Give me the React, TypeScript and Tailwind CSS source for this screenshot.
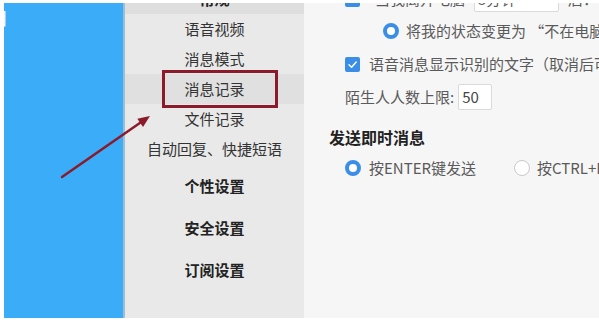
import React from "react";

const font = { fontFamily: '"Noto Sans CJK SC", "Noto Sans", sans-serif' };

function Check() {
  return (
    <span className="flex h-[15px] w-[15px] shrink-0 items-center justify-center rounded-[2px] bg-[#3a8ee8]">
      <svg width="11" height="11" viewBox="0 0 12 12">
        <path d="M2.2 6.3 L5 9 L10 3.2" fill="none" stroke="#fff" strokeWidth="1.6" strokeLinecap="round" strokeLinejoin="round" />
      </svg>
    </span>
  );
}

function RadioOn() {
  return <span className="box-border block h-[16px] w-[16px] shrink-0 rounded-full border-[4.5px] border-[#3a8ee8] bg-white" />;
}

export default function App() {
  const items = ["语音视频", "消息模式", "消息记录", "文件记录", "自动回复、快捷短语"];
  const bold = ["个性设置", "安全设置", "订阅设置"];
  return (
    <div className="relative h-[324px] w-[599px] overflow-hidden bg-white pl-[4px] pt-[3px]" style={font}>
      <div className="flex h-[315px]">
        {/* blue desktop */}
        <div className="w-[119px] overflow-hidden bg-[#3aacf8] pt-[5px]">
          <span className="-ml-[13px] block text-[17px] leading-[20px] text-white">目</span>
        </div>
        <div className="w-[2px] bg-[#9fbdd3]" />
        {/* sidebar */}
        <div className="w-[179px] overflow-hidden bg-[#e9e9e9] text-[15px] text-[#333]">
          <div className="-mt-[19px] flex h-[30px] items-center justify-center bg-[#dedede] font-bold text-[#222]">常规</div>
          {items.map((t) => (
            <div
              key={t}
              className={
                "flex h-[30px] items-center justify-center " + (t === "消息记录" ? "bg-[#e0e0e0]" : "")
              }
            >
              {t}
            </div>
          ))}
          <div className="h-[1px]" />
          {bold.map((t) => (
            <div key={t} className="flex h-[42px] items-center justify-center font-bold text-[#222]">
              {t}
            </div>
          ))}
        </div>
        {/* content */}
        <div className="flex-1 overflow-hidden bg-[#f6f6f6] text-[15px] text-[#5a5a5a]">
          <div className="-mt-[17px] ml-[41px] flex h-[26px] items-center whitespace-nowrap">
            <Check />
            <span className="ml-[15px]">当我离开电脑</span>
            <span className="ml-[9px] flex h-[26px] w-[85px] items-center rounded-[2px] border border-[#dadada] bg-white px-[3px]">5分钟</span>
            <span className="ml-[9px]">后：</span>
          </div>
          <div className="ml-[79px] flex h-[38px] items-center whitespace-nowrap">
            <RadioOn />
            <span className="ml-[7px]">将我的状态变更为 “不在电脑旁”</span>
          </div>
          <div className="ml-[41px] flex h-[28px] items-center whitespace-nowrap">
            <Check />
            <span className="ml-[9px]">语音消息显示识别的文字（取消后可手动转换）</span>
          </div>
          <div className="ml-[41px] flex h-[38px] items-center whitespace-nowrap">
            <span>陌生人人数上限:</span>
            <span className="ml-[4px] flex h-[26px] w-[34px] items-center rounded-[2px] border border-[#dadada] bg-white px-[3px] text-[#444]">50</span>
          </div>
          <div className="ml-[25px] flex h-[42px] items-center text-[16px] font-bold text-[#222]">发送即时消息</div>
          <div className="ml-[41px] flex h-[20px] items-center whitespace-nowrap">
            <RadioOn />
            <span className="ml-[8px]">按ENTER键发送</span>
            <span className="ml-[38px] box-border block h-[16px] w-[16px] shrink-0 rounded-full border border-[#c9c9c9] bg-white" />
            <span className="ml-[7px]">按CTRL+ENTER键发送</span>
          </div>
        </div>
      </div>
      <div className="absolute left-[162px] top-[70px] h-[38px] w-[116px] border-[3px] border-[#8b1a2a]" />
      <svg className="absolute left-0 top-0" width="599" height="324">
        <line x1="62" y1="177" x2="142" y2="121.5" stroke="#8b1a2a" strokeWidth="2.5" strokeLinecap="round" />
        <polygon points="150,116 143,126.9 137.3,118.7" fill="#8b1a2a" />
      </svg>
    </div>
  );
}
